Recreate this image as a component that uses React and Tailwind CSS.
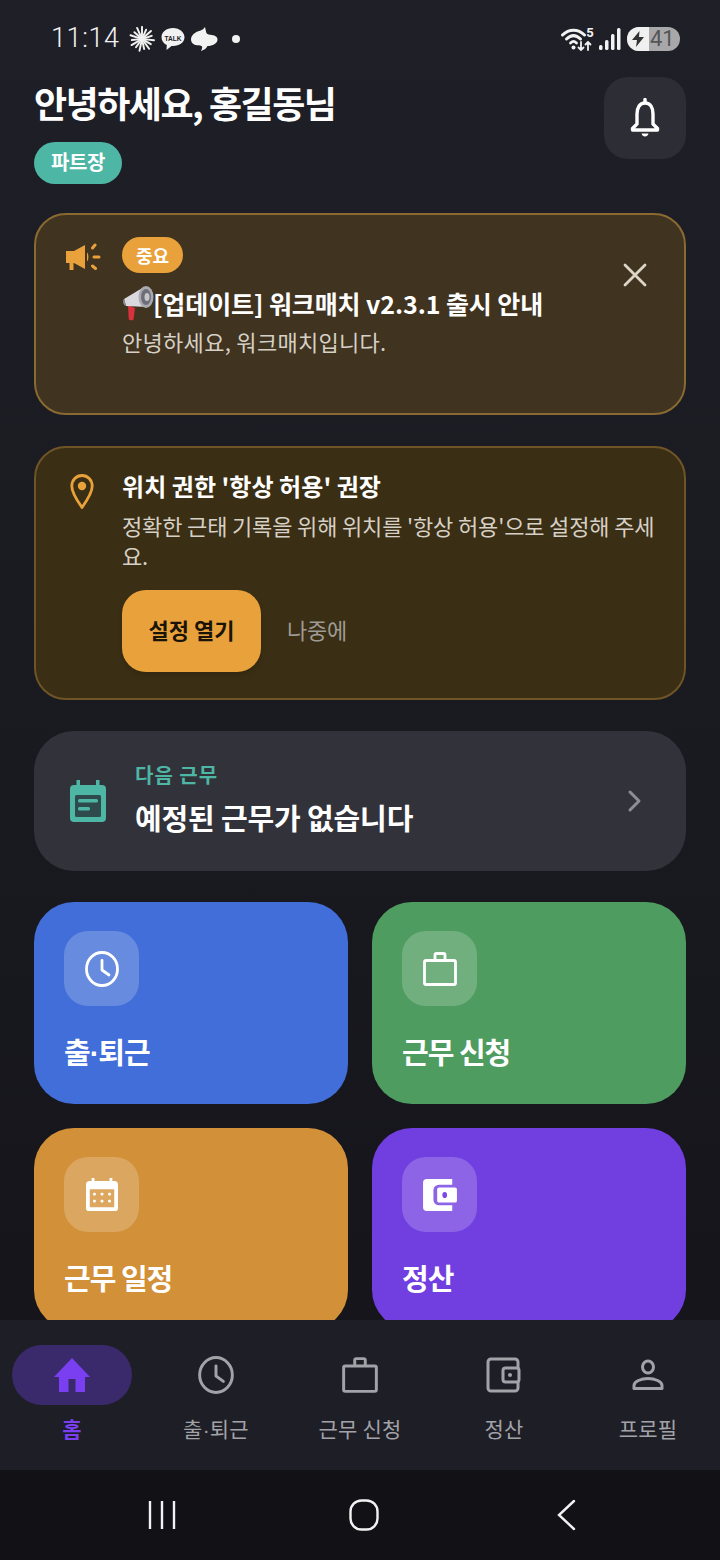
import React from 'react';

const KR = 'font-["Noto_Sans_CJK_KR","Noto_Sans",sans-serif]';

const MidDot = () => <span className='font-["Liberation_Sans",sans-serif]'>·</span>;

const StarburstIcon = () => (
  <svg width="26" height="26" viewBox="0 0 28 28" stroke="#f2f2f2" strokeWidth="2.100" strokeLinecap="round">
    {[0, 24, 48, 72, 96, 120, 144, 168, 192, 216, 240, 264, 288, 312, 336].map((a) => (
      <line key={a} x1="14" y1="10" x2="14" y2={a % 48 === 0 ? 1 : 3} transform={`rotate(${a} 14 14)`} />
    ))}
    <circle cx="14" cy="14" r="3.500" fill="#f2f2f2" stroke="none" />
  </svg>
);

const TalkIcon = () => (
  <svg width="26" height="26" viewBox="0 0 26 26">
    <path d="M13 2C6.4 2 1.5 6 1.5 11.2c0 3.4 2.1 6.2 5.300 7.800L6.500 24l5-4.100c.5 0 1 .1 1.500.1 6.600 0 11.500-4 11.500-8.800S19.600 2 13 2z" fill="#f2f2f2" />
    <text x="13" y="14.500" textAnchor="middle" fontSize="8" fontWeight="700" fill="#222" fontFamily="Liberation Sans, sans-serif" textLength="17" lengthAdjust="spacingAndGlyphs">TALK</text>
  </svg>
);

const SwirlIcon = () => (
  <svg width="28" height="26" viewBox="0 0 28 26">
    <path d="M15 1c-1 1.500-2.500 3-5 3.800C5 6.200 1 9.200 1 13.500c0 3 2.500 5.500 6 5.800 2.400.2 4.500.3 5 1.200.6 1.100-.3 2.900-1 4.500 3.500-1 5.500-3 6.500-5 5 0 10-2.400 10-6.500 0-2.500-2.300-4.200-5.500-4.500-2.700-.3-4.500-.5-5.200-1.500C16 6.500 15.700 3.500 15 1z" fill="#f2f2f2" />
  </svg>
);

const WifiIcon = () => (
  <svg width="34" height="26" viewBox="0 0 34 26" fill="none" stroke="#f2f2f2" strokeLinecap="round">
    <path d="M1.500 9C8 2.500 17 2.500 23.500 9" strokeWidth="3" />
    <path d="M5.500 13c4.500-4.300 9.500-4.300 14 0" strokeWidth="3" />
    <path d="M9.500 17c2.500-2.300 3.500-2.300 6 0" strokeWidth="2.800" />
    <circle cx="12.500" cy="21.500" r="2" fill="#f2f2f2" stroke="none" />
    <path d="M20 16v8M17.500 21.500l2.500 2.500 2.500-2.500M27 24v-8M24.500 18.500l2.500-2.500 2.500 2.500" strokeWidth="1.800" />
    <text x="29" y="11" textAnchor="middle" fontSize="13" fontWeight="700" fill="#f2f2f2" stroke="none" fontFamily="Roboto, sans-serif">5</text>
  </svg>
);

const SignalIcon = () => (
  <svg width="22" height="24" viewBox="0 0 22 24" fill="#f2f2f2">
    <rect x="0" y="18" width="3.500" height="5" rx="1.500" />
    <rect x="6" y="13" width="3.500" height="10" rx="1.500" />
    <rect x="12" y="7" width="3.500" height="16" rx="1.500" />
    <rect x="18" y="1" width="3.500" height="22" rx="1.500" />
  </svg>
);

const BellIcon = () => (
  <svg width="34" height="40" viewBox="0 0 34 40" fill="none" stroke="#fff" strokeWidth="3.400" strokeLinejoin="round">
    <path d="M17 5c-5.500 0-8 5-8 11v10l-4.500 4.500v1.500h25v-1.500L25 26V16c0-6-2.500-11-8-11z" />
    <path d="M17 1.500v3" strokeLinecap="round" />
    <path d="M13.500 35.500h7c-.5 2-1.800 3-3.500 3s-3-1-3.500-3z" fill="#fff" stroke="none" />
  </svg>
);

const CampaignIcon = () => (
  <svg width="36" height="30" viewBox="0 0 36 30" fill="#e9a23b">
    <path d="M1 9h8L20 3v24L9 21H8.500v7H4.500v-7H1z" strokeLinejoin="round" />
    <path d="M22 10.500c1.800 1 1.800 8 0 9z" />
    <g stroke="#e9a23b" strokeWidth="3" strokeLinecap="round">
      <path d="M27.500 6l2.500-3M29 15h5M27.500 24l3 2.500" />
    </g>
  </svg>
);

const MegaphoneEmoji = () => (
  <svg width="34" height="36" viewBox="0 0 34 36" className="shrink-0">
    <path d="M6 20l7 3-1.500 11.500c-.3 1.200-5 .7-4.800-.6z" fill="#d8323c" />
    <path d="M2 14l20-12 3 20-21-1z" fill="#d9d9de" />
    <path d="M2 14c-1.500 1-1.500 6 2 7z" fill="#8b8c94" />
    <ellipse cx="24" cy="12" rx="7.500" ry="11" fill="#a8a9b1" />
    <ellipse cx="24" cy="12" rx="5" ry="8" fill="#6d6e78" />
    <ellipse cx="25" cy="12" rx="2.500" ry="4" fill="#c5c6cc" />
  </svg>
);

const CloseIcon = () => (
  <svg width="26" height="26" viewBox="0 0 26 26" stroke="#ddd6c8" strokeWidth="2.800" strokeLinecap="round">
    <path d="M3 3l20 20M23 3L3 23" />
  </svg>
);

const PinIcon = () => (
  <svg width="24" height="36" viewBox="0 0 24 36" fill="none" stroke="#e9a23b" strokeWidth="2.800">
    <path d="M12 33.500C6 25 1.800 18.500 1.800 12.200 1.800 6 6.300 1.500 12 1.500S22.200 6 22.200 12.200c0 6.300-4.200 12.800-10.200 21.300z" strokeLinejoin="round" />
    <circle cx="12" cy="12" r="4.200" fill="#e9a23b" stroke="none" />
  </svg>
);

const EventNoteIcon = () => (
  <svg width="38" height="44" viewBox="0 0 38 44" fill="#4db6a4">
    <path d="M7.500 1h3.500v5h16V1h3.500v5H33a4 4 0 0 1 4 4v29a4 4 0 0 1-4 4H5a4 4 0 0 1-4-4V10a4 4 0 0 1 4-4h2.500z" />
    <rect x="6" y="16" width="26" height="22" rx="1.500" fill="#2f4a4c" />
    <rect x="9" y="20" width="20" height="3.500" rx="1.500" fill="#4db6a4" />
    <rect x="9" y="28" width="12" height="3.500" rx="1.500" fill="#4db6a4" />
  </svg>
);

const ChevronIcon = () => (
  <svg width="16" height="24" viewBox="0 0 16 24" fill="none" stroke="#8e8e94" strokeWidth="3" strokeLinecap="round" strokeLinejoin="round">
    <path d="M3 3l9 9-9 9" />
  </svg>
);

const ClockIcon = ({ color, size }) => (
  <svg width={size} height={size} viewBox="0 0 36 36" fill="none" stroke={color} strokeWidth="2.800" strokeLinecap="round" strokeLinejoin="round">
    <ellipse cx="18" cy="18" rx="15.500" ry="16.500" />
    <path d="M18 9.500V19l7 5" />
  </svg>
);

const BagIcon = ({ color, size }) => (
  <svg width={size} height={size} viewBox="0 0 36 36" fill="none" stroke={color} strokeWidth="2.800" strokeLinejoin="round">
    <rect x="2.500" y="9.500" width="31" height="24" rx="1.500" />
    <path d="M13 9.500V4a1.500 1.500 0 0 1 1.500-1.500h7A1.500 1.500 0 0 1 23 4v5.500" />
  </svg>
);

const CalendarIcon = () => (
  <svg width="32" height="34" viewBox="0 0 34 36" fill="#fff">
    <path d="M6 0h3v3h16V0h3v3h2a4 4 0 0 1 4 4v25a3 3 0 0 1-3 3H3a3 3 0 0 1-3-3V7a4 4 0 0 1 4-4h2z" />
    <rect x="4" y="12" width="26" height="19" rx="1" fill="#dda75f" />
    {[9, 17, 25].map((x) => (
      <g key={x}>
        <rect x={x - 1.500} y="15.500" width="3" height="3" rx="1" fill="#fff" />
        <rect x={x - 1.500} y="23" width="3" height="3" rx="1" fill="#fff" />
      </g>
    ))}
  </svg>
);

const WalletFillIcon = () => (
  <svg width="34" height="32" viewBox="0 0 36 34">
    <path d="M4 0h27v6H17a6 6 0 0 0-6 6v10a6 6 0 0 0 6 6h14v6H4a4 4 0 0 1-4-4V4a4 4 0 0 1 4-4z" fill="#fff" />
    <rect x="15" y="9" width="21" height="16" rx="2" fill="#fff" />
    <ellipse cx="23" cy="17" rx="2.500" ry="3.300" fill="#7a4be6" />
  </svg>
);

const HomeIcon = () => (
  <svg width="36" height="34" viewBox="0 0 36 34" fill="#7a3ff0">
    <path d="M18 0l18 19h-5v15H21.500V21h-7v13H5V19H0z" />
  </svg>
);

const WalletIcon = () => (
  <svg width="36" height="36" viewBox="0 0 36 36" fill="none" stroke="#a2a2a8" strokeWidth="3" strokeLinejoin="round">
    <rect x="2" y="2" width="30" height="32" rx="3" />
    <rect x="17" y="11" width="16" height="14" rx="2.500" fill="#1e1e26" />
    <circle cx="24" cy="18" r="2" fill="#a2a2a8" stroke="none" />
  </svg>
);

const PersonIcon = () => (
  <svg width="32" height="32" viewBox="0 0 32 32" fill="none" stroke="#a2a2a8" strokeWidth="3">
    <ellipse cx="16" cy="8" rx="5.500" ry="6" />
    <path d="M2 29.500v-3c0-4 7-7 14-7s14 3 14 7v3z" strokeLinejoin="round" />
  </svg>
);

const tiles = [
  { id: 'clock', label: <>출<MidDot />퇴근</>, bg: 'bg-[#416ed8]', icon: <ClockIcon color="#fff" size={36} /> },
  { id: 'apply', label: '근무 신청', bg: 'bg-[#4e9c60]', icon: <BagIcon color="#fff" size={36} /> },
  { id: 'schedule', label: '근무 일정', bg: 'bg-[#d29039]', icon: <CalendarIcon /> },
  { id: 'pay', label: '정산', bg: 'bg-[#713ee0]', icon: <WalletFillIcon /> },
];

const navItems = [
  { id: 'clock', label: <>출<MidDot />퇴근</>, icon: <ClockIcon color="#a2a2a8" size={38} /> },
  { id: 'apply', label: '근무 신청', icon: <BagIcon color="#a2a2a8" size={38} /> },
  { id: 'pay', label: '정산', icon: <WalletIcon /> },
  { id: 'profile', label: '프로필', icon: <PersonIcon /> },
];

const Tile = ({ tile }) => (
  <div className={`${tile.bg} h-[202px] shrink-0 rounded-[40px] pl-[30px] pt-[29px]`}>
    <div className="flex h-[75px] w-[75px] items-center justify-center rounded-[24px] bg-white/20">
      {tile.icon}
    </div>
    <p className="mt-[24px] text-[29px] leading-[42px] font-bold tracking-[-1px] text-white">{tile.label}</p>
  </div>
);

export default function App() {
  return (
    <div className={`${KR} flex h-[1560px] w-[720px] flex-col overflow-hidden bg-[#1b1b22]`}>
      <div className="flex-1 min-h-0 overflow-hidden bg-gradient-to-b from-[#1f1f27] to-[#15151b]">
        {/* status bar */}
        <div className="flex h-[77px] items-center justify-between pr-[40px] pl-[51px]">
          <div className="flex items-center text-[#f2f2f2]">
            <span className='font-["Roboto",sans-serif] text-[27px] font-light tracking-[0.6px]'>11:14</span>
            <span className="ml-[9px]"><StarburstIcon /></span>
            <span className="ml-[5px]"><TalkIcon /></span>
            <span className="ml-[4px]"><SwirlIcon /></span>
            <span className="ml-[14px] h-[8px] w-[8px] rounded-full bg-[#f2f2f2]" />
          </div>
          <div className="flex items-center gap-[4px]">
            <WifiIcon />
            <SignalIcon />
            <div className='ml-[2px] flex h-[24px] w-[53px] items-center overflow-hidden rounded-full bg-[#a8a8aa] font-["Roboto",sans-serif]'>
              <div className="flex h-full w-[22px] items-center justify-center bg-[#f0f0f0]">
                <svg width="12" height="16" viewBox="0 0 12 16" fill="#333"><path d="M7.500 0L0 9h5l-1 7 8-10H7z" /></svg>
              </div>
              <span className="ml-[1px] text-[22px] leading-none text-[#555]">41</span>
            </div>
          </div>
        </div>

        <div className="px-[34px]">
          {/* greeting */}
          <div className="flex items-start justify-between">
            <div>
              <h1 className="text-[36px] leading-[50px] font-bold tracking-[-1.500px] text-white">안녕하세요, 홍길동님</h1>
              <span className="mt-[15px] flex h-[42px] w-[88px] items-center justify-center rounded-full bg-[#4db6a4] pb-[2px] text-[20px] font-bold tracking-[-0.4px] text-white">파트장</span>
            </div>
            <button className="flex h-[82px] w-[82px] items-center justify-center rounded-[24px] bg-[#2d2d35]">
              <BellIcon />
            </button>
          </div>

          {/* notice */}
          <div className="mt-[29px] flex h-[202px] rounded-[32px] border-2 border-[#8a6a32] bg-[#40331f] pt-[22px] pr-[36px] pl-[29px]">
            <div className="w-[57px] shrink-0 pt-[5px]"><CampaignIcon /></div>
            <div className="flex-1">
              <span className="flex h-[36px] w-[61px] items-center justify-center rounded-full bg-[#e9a23b] text-[18px] font-bold text-white">중요</span>
              <div className="mt-[11px] flex items-center text-[25px] leading-[38px] font-bold tracking-[-0.1px] text-white">
                <MegaphoneEmoji />
                <span className="-ml-[3px]">[업데이트] 워크매치 v2.3.1 출시 안내</span>
              </div>
              <p className="mt-[3px] text-[22px] leading-[32px] tracking-[0.3px] text-[#d6d0c6]">안녕하세요, 워크매치입니다.</p>
            </div>
            <div className="pt-[25px]"><CloseIcon /></div>
          </div>

          {/* location */}
          <div className="mt-[31px] flex h-[254px] rounded-[32px] border-2 border-[#6f5526] bg-[#3a2e14] pt-[20px] pr-[20px] pl-[34px]">
            <div className="w-[52px] shrink-0 pt-[6px]"><PinIcon /></div>
            <div className="flex-1">
              <p className="text-[24px] leading-[36px] font-bold tracking-[0.05px] text-white">위치 권한 '항상 허용' 권장</p>
              <p className="mt-[6px] text-[22px] leading-[30px] tracking-[-0.15px] text-[#d6d0c6]">정확한 근태 기록을 위해 위치를 '항상 허용'으로 설정해 주세요.</p>
              <div className="mt-[20px] flex items-center">
                <button className="h-[82px] w-[139px] rounded-[24px] bg-[#e9a23b] pb-[3px] text-[22px] font-bold tracking-[0px] text-[#1a1408] shadow-md">설정 열기</button>
                <span className="ml-[26px] pb-[3px] text-[22px] tracking-[-0.3px] text-[#9e9a94]">나중에</span>
              </div>
            </div>
          </div>

          {/* next shift */}
          <div className="mt-[31px] flex h-[140px] items-center rounded-[40px] bg-[#32323a] pr-[43px] pl-[35px]">
            <EventNoteIcon />
            <div className="ml-[28px] flex-1 pb-[4px]">
              <p className="text-[20px] leading-[30px] font-bold tracking-[1px] text-[#4db6a4]">다음 근무</p>
              <p className="mt-[6px] text-[29px] leading-[42px] font-bold tracking-[-0.15px] text-white">예정된 근무가 없습니다</p>
            </div>
            <ChevronIcon />
          </div>

          {/* quick menu */}
          <div className="mt-[31px] grid grid-cols-2 gap-[24px]">
            {tiles.map((t) => (
              <Tile key={t.id} tile={t} />
            ))}
          </div>
        </div>
      </div>

      {/* bottom tabs */}
      <nav className="flex h-[150px] shrink-0 bg-[#1e1e26] pt-[25px]">
        <div className="flex w-[144px] flex-col items-center">
          <div className="flex h-[60px] w-[120px] items-center justify-center rounded-full bg-[#3b2a6b]">
            <HomeIcon />
          </div>
          <span className="mt-[7px] text-[21px] leading-[32px] font-bold text-[#7a3ff0]">홈</span>
        </div>
        {navItems.map((item) => (
          <div key={item.id} className="flex w-[144px] flex-col items-center">
            <div className="flex h-[60px] items-center justify-center">{item.icon}</div>
            <span className="mt-[7px] text-[21px] leading-[32px] tracking-[0.2px] text-[#a2a2a8]">{item.label}</span>
          </div>
        ))}
      </nav>

      {/* android nav */}
      <div className="flex h-[90px] shrink-0 items-center bg-[#111116] pl-[148px]">
        <svg width="28" height="30" viewBox="0 0 28 30" stroke="#f2f2f2" strokeWidth="2.400">
          <path d="M2 1v28M14 1v28M26 1v28" />
        </svg>
        <svg className="ml-[173px]" width="30" height="32" viewBox="0 0 30 32" fill="none" stroke="#f2f2f2" strokeWidth="2.400">
          <rect x="1.500" y="1.500" width="27" height="29" rx="11" />
        </svg>
        <svg className="ml-[177px]" width="20" height="32" viewBox="0 0 20 32" fill="none" stroke="#f2f2f2" strokeWidth="2.400" strokeLinecap="round">
          <path d="M18 2L3 16l15 14" />
        </svg>
      </div>
    </div>
  );
}
